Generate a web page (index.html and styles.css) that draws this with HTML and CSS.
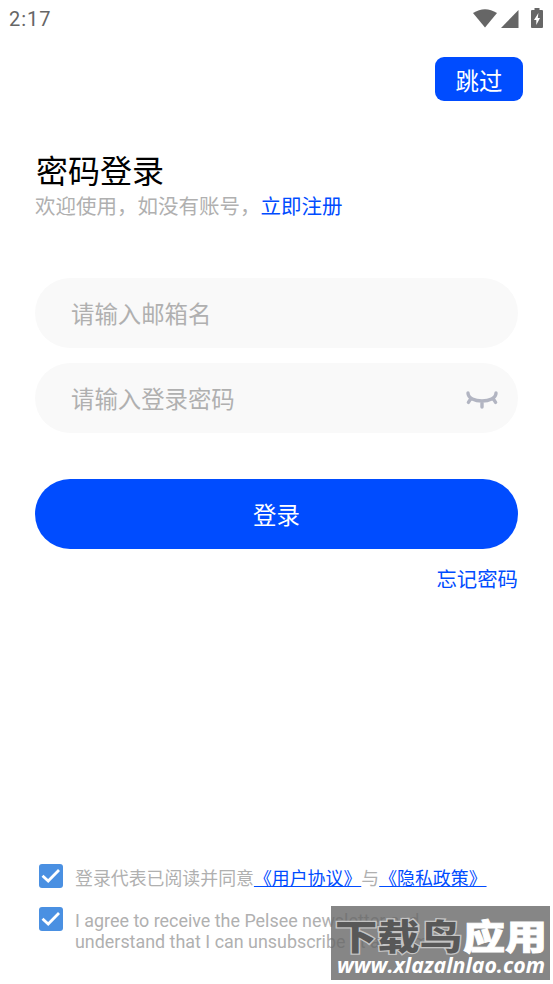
FILE: index.html
```
<!DOCTYPE html>
<html lang="zh-CN">
<head>
    <meta charset="UTF-8">
    <meta name="viewport" content="width=device-width, initial-scale=1.0">
    <title>密码登录</title>
    <link rel="stylesheet" href="styles.css">
</head>
<body>
    <div class="status-bar">
        <span class="time">2:17</span>
        <div class="status-icons">
            <svg class="wifi" width="24" height="19" viewBox="0 0 24 19">
                <path d="M0 4Q12 -3.6 24 4L12 18.6Z"/>
            </svg>
            <svg class="signal" width="18" height="18" viewBox="0 0 18 18">
                <path d="M0 18L17.5 0V18Z"/>
            </svg>
            <svg class="battery" width="12" height="20" viewBox="0 0 12 20">
                <path fill-rule="evenodd" d="M3.5 0H8.5V2H11Q12 2 12 3V19Q12 20 11 20H1Q0 20 0 19V3Q0 2 1 2H3.5ZM7.4 5L3 12H5.3V17L9 10H6.8Z"/>
            </svg>
        </div>
    </div>

    <main class="page">
        <button type="button" class="skip">跳过</button>

        <h1>密码登录</h1>
        <p class="subtitle">欢迎使用，如没有账号，<a href="#">立即注册</a></p>

        <form class="login-form">
            <div class="field">
                <input type="text" placeholder="请输入邮箱名">
            </div>
            <div class="field">
                <input type="password" placeholder="请输入登录密码">
                <svg class="eye" width="32" height="18" viewBox="0 0 32 18">
                    <path d="M2 2C2 12.6 30 12.6 30 2M5 7.4L2.4 11.4M27 7.4L29.6 11.4M16 10V16"/>
                </svg>
            </div>
            <button type="button" class="login">登录</button>
        </form>
        <a href="#" class="forgot">忘记密码</a>

        <div class="agreements">
            <div class="agreement">
                <span class="checkbox">
                    <svg width="24" height="24" viewBox="0 0 24 24"><path d="M3.5 11.8L9.2 17L20 6"/></svg>
                </span>
                <p class="terms">登录代表已阅读并同意<a href="#">《用户协议》</a>与<a href="#">《隐私政策》</a></p>
            </div>
            <div class="agreement">
                <span class="checkbox">
                    <svg width="24" height="24" viewBox="0 0 24 24"><path d="M3.5 11.8L9.2 17L20 6"/></svg>
                </span>
                <p class="news">I agree to receive the Pelsee newsletter and<br>understand that I can unsubscribe at any time</p>
            </div>
        </div>
    </main>

    <div class="watermark">
        <svg width="219" height="74" viewBox="0 0 219 74">
            <g class="mark-name">
                <text class="dark" x="4" y="44" textLength="127" lengthAdjust="spacingAndGlyphs">下载鸟</text>
                <text class="light" x="132" y="44" textLength="84" lengthAdjust="spacingAndGlyphs">应用</text>
            </g>
            <text class="mark-url" x="6" y="67" textLength="208" lengthAdjust="spacingAndGlyphs">www.xlazalnlao.com</text>
        </svg>
    </div>
</body>
</html>
```
FILE: styles.css
```
* {
    margin: 0;
    padding: 0;
    box-sizing: border-box;
}

body {
    position: relative;
    height: 984px;
    overflow: hidden;
    background: #fff;
    font-family: Roboto, 'Noto Sans CJK SC', sans-serif;
}

a {
    color: #004cff;
    text-decoration: none;
}

button {
    border: none;
    background: #004cff;
    color: #fff;
    font-family: inherit;
}

/* Status bar */
.status-bar {
    display: flex;
    justify-content: space-between;
    height: 38px;
    padding: 8px 10px 0 9px;
    color: #666;
}

.time {
    font-size: 20px;
    line-height: 23px;
    letter-spacing: 1px;
}

.status-icons {
    display: flex;
    align-items: flex-start;
    fill: #666;
}

.signal {
    margin: 2px 12px 0 4px;
}

.wifi {
    margin-top: 1px;
}

/* Page */
.page {
    display: flex;
    flex-direction: column;
    padding: 19px 35px 0;
}

.skip {
    align-self: flex-end;
    width: 88px;
    height: 44px;
    margin-right: -5px;
    padding-top: 1px;
    border-radius: 9px;
    font-size: 23.4px;
}

h1 {
    margin-top: 49px;
    padding-left: 1px;
    font-size: 32px;
    line-height: 44px;
    font-weight: 400;
    color: #000;
}

.subtitle {
    margin-top: -1px;
    font-size: 20.5px;
    line-height: 28px;
    color: #b0b0b0;
}

.login-form {
    margin-top: 57px;
}

.field {
    display: flex;
    align-items: center;
    height: 70px;
    margin-bottom: 15px;
    padding: 0 20px 0 36px;
    border-radius: 35px;
    background: #f9f9f9;
}

.field input {
    flex: 1;
    min-width: 0;
    padding-top: 4px;
    border: none;
    outline: none;
    background: transparent;
    font-family: inherit;
    font-size: 23.4px;
}

.field input::placeholder {
    color: #b0b0b0;
}

.eye {
    margin-top: 3px;
    fill: none;
    stroke: #b2b5c2;
    stroke-width: 3.4;
    stroke-linecap: round;
}

.login {
    display: block;
    width: 100%;
    height: 70px;
    margin-top: 46px;
    border-radius: 35px;
    font-size: 23.4px;
}

.forgot {
    align-self: flex-end;
    margin-top: 17px;
    font-size: 20.4px;
    line-height: 28px;
}

/* Agreements */
.agreements {
    margin-top: 270px;
    padding-left: 4px;
}

.agreement {
    display: flex;
    gap: 12px;
    height: 43px;
    color: #b0b0b0;
    font-size: 17.9px;
    line-height: 26px;
    white-space: nowrap;
}

.agreement a {
    text-decoration: underline;
}

.checkbox {
    width: 24px;
    height: 24px;
    border-radius: 3px;
    background: #4a90e2;
}

.checkbox svg {
    display: block;
    fill: none;
    stroke: #fff;
    stroke-width: 2.8;
}

.terms {
    padding-top: 2px;
}

.news {
    padding-top: 3px;
    line-height: 21px;
}

/* Watermark over the bottom corner */
.watermark {
    position: absolute;
    left: 331px;
    top: 906px;
    width: 219px;
    height: 74px;
    background: rgba(104, 104, 104, 0.8);
}

.watermark svg {
    display: block;
}

.mark-name {
    font-family: 'Noto Sans CJK SC', sans-serif;
    font-size: 35px;
    font-weight: 900;
}

.dark {
    fill: #585858;
    stroke: #c4c4c4;
    stroke-width: 2.5;
    paint-order: stroke;
}

.light {
    fill: #fff;
    stroke: #fff;
    stroke-width: 0.8;
}

.mark-url {
    fill: #fff;
    font-family: 'Open Sans', sans-serif;
    font-size: 21px;
    font-weight: 700;
    font-style: italic;
}
```
